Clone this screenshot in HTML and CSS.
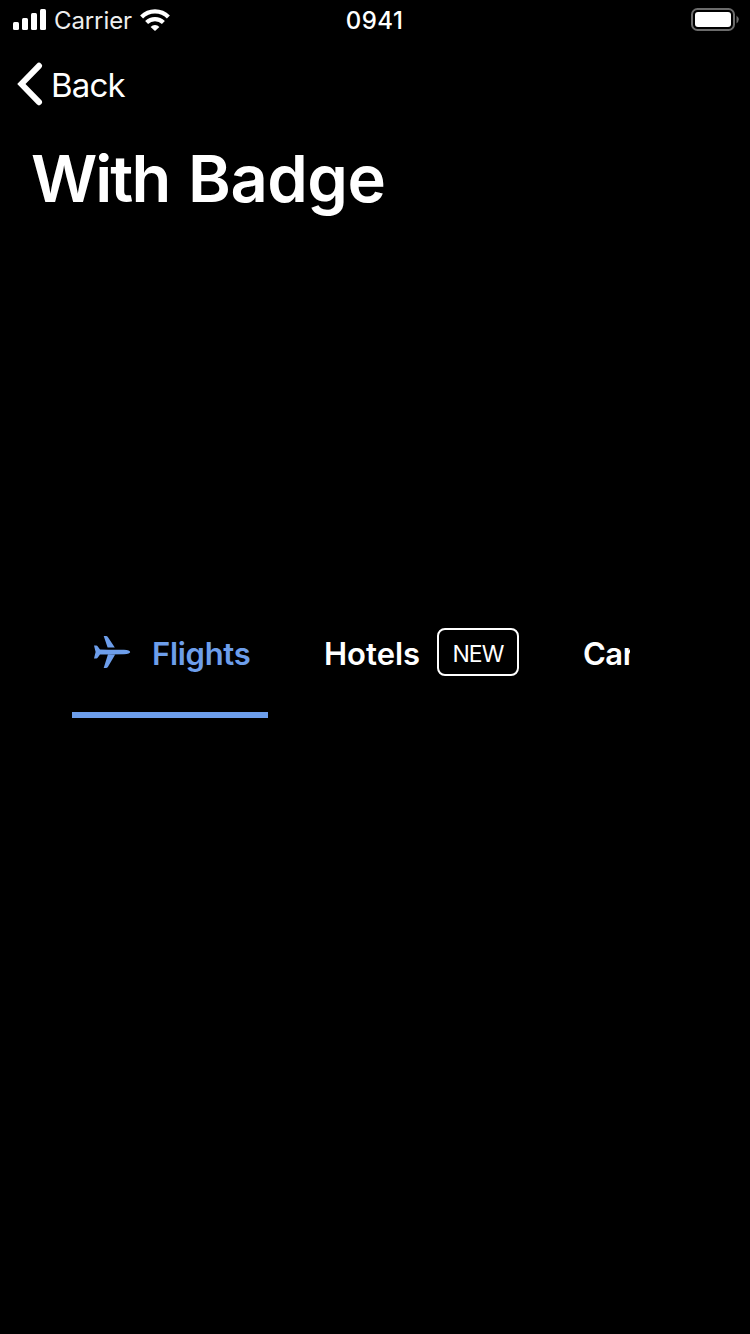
FILE: index.html
```html
<!DOCTYPE html>
<html lang="en">
<head>
<meta charset="utf-8">
<title>With Badge</title>
<link rel="stylesheet" href="styles.css">
</head>
<body>
<header class="status">
  <div class="status-left">
    <svg class="signal" width="34" height="22" viewBox="0 0 34 22" fill="#fff"><rect x="0" y="14" width="6" height="8" rx="1.5"/><rect x="9" y="10" width="6" height="12" rx="1.5"/><rect x="18" y="5" width="6" height="17" rx="1.5"/><rect x="27" y="1" width="6" height="21" rx="1.5"/></svg>
    <span class="carrier">Carrier</span>
    <svg class="wifi" width="30" height="22" viewBox="0 0 30 22"><g fill="none" stroke="#fff" stroke-width="4.2"><path d="M1.6 7.9A19 19 0 0 1 28.4 7.9"/><path d="M6.6 13.5A12 12 0 0 1 23.4 13.5"/></g><path d="M15 22L10.6 17.9A6.2 6.2 0 0 1 19.4 17.9Z" fill="#fff"/></svg>
  </div>
  <time class="clock">0941</time>
  <svg class="battery" width="48" height="24" viewBox="0 0 48 24"><rect x="1" y="1" width="42" height="21" rx="5.5" fill="none" stroke="#6b6b6b" stroke-width="2"/><rect x="4" y="4" width="36" height="15" rx="3" fill="#fff"/><path d="M45.5 7.5Q50 11.5 45.5 15.5Z" fill="#6b6b6b"/></svg>
</header>
<nav class="navbar">
  <svg class="chevron" width="26" height="44" viewBox="0 0 26 44"><path d="M22 3.8L4.4 22L22 40.2" fill="none" stroke="#fff" stroke-width="6" stroke-linecap="round" stroke-linejoin="miter"/></svg>
  <span class="back">Back</span>
</nav>
<h1 class="title"><span class="title-lead">With</span> Badge</h1>
<main class="tabs">
  <div class="tab tab-flights">
    <svg class="plane" width="38" height="34" viewBox="93 635 38 34" fill="#6d9eeb"><path d="M94 645.5H96.2Q97.2 645.5 97.8 646.5L100 649.6L108 649.7H124C128 649.8 130.2 651 130.2 652C130.2 653.1 128 654.2 124 654.3L108 654.4H100L97.8 657.6Q97.2 658.5 96.2 658.6H94L95.6 652Z"/><path d="M103.7 636H106Q107.2 636 108 637.2L114.8 647.4H107.6Z"/><path d="M103.7 668H106Q107.2 668 108 666.8L115.2 654.4L108 654.2Z"/></svg>
    <span class="label label-flights">Flights</span>
  </div>
  <div class="tab tab-hotels">
    <span class="label label-hotels">Hotels</span>
    <span class="badge">NEW</span>
  </div>
  <div class="tab tab-cars"><span class="label label-cars">Car</span></div>
</main>
</body>
</html>
```
FILE: styles.css
```css
* { box-sizing: border-box; }
body { margin: 0; width: 750px; height: 1334px; overflow: hidden; background: #000; color: #fff; font-family: Inter, "Liberation Sans", sans-serif; white-space: nowrap; }
svg { display: block; flex: none; }
.status { display: grid; grid-template-columns: 1fr 60px 1fr; height: 40px; padding: 0 11px 0 13px; }
.status-left { display: flex; }
.signal { margin-top: 8px; }
.carrier { width: 78px; margin-left: 7px; font-size: 24px; line-height: 42px; letter-spacing: -0.1px; color: #eee; }
.wifi { margin: 9px 0 0 8px; }
.clock { font-size: 24px; font-weight: 500; line-height: 42px; letter-spacing: 0.5px; margin-left: -3px; text-align: center; }
.battery { justify-self: end; margin-top: 8px; }
.navbar { display: flex; height: 88px; padding-left: 17px; }
.chevron { margin-top: 22px; }
.back { margin-left: 8px; font-size: 33px; line-height: 90px; letter-spacing: -0.8px; }
.title { margin: 0; height: 104px; padding-left: 31px; font-size: 65px; font-weight: 600; line-height: 102px; letter-spacing: -0.5px; }
.title-lead { letter-spacing: -2px; margin-right: 3px; }
.tabs { display: flex; width: 558px; height: 130px; margin: 356px 0 0 72px; overflow: hidden; }
.tab { display: flex; align-items: center; flex: none; height: 130px; padding-top: 4px; }
.tab-flights { width: 196px; padding-left: 21px; border-bottom: 6px solid #6d9eeb; color: #6d9eeb; }
.tab-hotels { width: 291px; padding: 4px 40px 6px 56px; justify-content: space-between; }
.tab-cars { padding: 4px 0 6px 24px; }
.label { font-size: 31px; font-weight: 600; line-height: 40px; padding-top: 4px; }
.label-flights { margin-left: 21px; letter-spacing: -0.3px; }
.label-hotels { letter-spacing: 0; }
.label-cars { letter-spacing: -0.5px; }
.badge { width: 82px; height: 48px; border: 2px solid #fff; border-radius: 8px; font-size: 23px; line-height: 48px; text-align: center; letter-spacing: -0.9px; }
```
